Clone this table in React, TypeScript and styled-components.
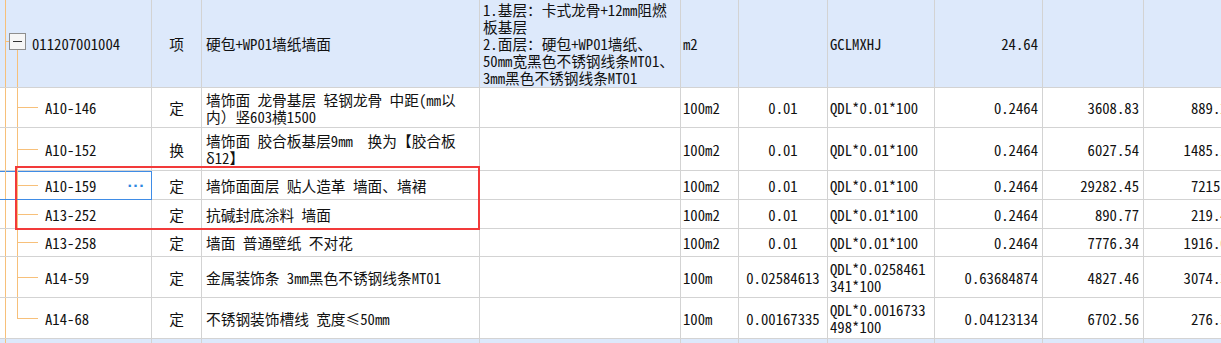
import React from 'react';
import styled, { createGlobalStyle } from 'styled-components';

const GlobalStyle = createGlobalStyle`
  html, body {
    margin: 0;
    padding: 0;
    background: #ffffff;
    overflow: hidden;
  }
`;

const COLS = '152px 50px 278px 201px 58px 89px 107px 108px 101px 100px';
const LINE = '#d3d3d3';
const TREE = '#f7c07a';

const Sheet = styled.div`
  position: relative;
  width: 1300px;
  font-family: 'Noto Sans Mono CJK SC', 'Noto Sans CJK SC', 'DejaVu Sans Mono', monospace;
  font-size: 14.7px;
  color: #111;
`;

const Row = styled.div<{ $h: number; $group?: boolean }>`
  display: grid;
  grid-template-columns: ${COLS};
  height: ${(p) => p.$h}px;
  background: ${(p) => (p.$group ? '#dde9fb' : '#ffffff')};
`;

const Cell = styled.div<{ $align?: 'left' | 'center' | 'right'; $pad?: string; $selected?: boolean }>`
  box-sizing: border-box;
  display: flex;
  align-items: center;
  justify-content: ${(p) =>
    p.$align === 'right' ? 'flex-end' : p.$align === 'center' ? 'center' : 'flex-start'};
  padding: ${(p) => p.$pad || '0 4px'};
  border-right: 1px solid ${(p) => (p.$selected ? '#3f8ce6' : LINE)};
  border-bottom: 1px solid ${(p) => (p.$selected ? '#3f8ce6' : LINE)};
  box-shadow: ${(p) => (p.$selected ? 'inset 0 1px 0 #3f8ce6' : 'none')};
  overflow: hidden;
  min-width: 0;
`;

const Lines = styled.div`
  line-height: 17px;
  white-space: pre;
`;

const CodeText = styled.span`
  flex: 1;
  white-space: pre;
  line-height: 17px;
`;

const Dots = styled.span`
  color: #2f86e0;
  font-weight: 700;
  letter-spacing: 1px;
  margin-right: 6px;
  font-family: 'DejaVu Sans', sans-serif;
  font-size: 13px;
`;

const Mark = styled.div`
  position: absolute;
  left: 15px;
  top: 166px;
  width: 465px;
  height: 64px;
  box-sizing: border-box;
  border: 2px solid #f23a3a;
  pointer-events: none;
`;

function GroupGuide({ h }: { h: number }) {
  const c = Math.round(h / 2) - 3;
  return (
    <svg width={28} height={h} style={{ flex: 'none' }}>
      <line x1={5.5} y1={0} x2={5.5} y2={h} stroke={TREE} />
      <line x1={5} y1={c + 0.5} x2={10} y2={c + 0.5} stroke={TREE} />
      <line x1={17.5} y1={c + 8} x2={17.5} y2={h} stroke={TREE} />
      <rect x={9.5} y={c - 7.5} width={16} height={16} fill="#f6f6f6" stroke="#8e8e8e" />
      <line x1={13} y1={c + 0.5} x2={22} y2={c + 0.5} stroke="#333" />
    </svg>
  );
}

function ChildGuide({ h, last }: { h: number; last?: boolean }) {
  const c = Math.floor(h / 2) + 0.5;
  return (
    <svg width={45} height={h} style={{ flex: 'none' }}>
      <line x1={5.5} y1={0} x2={5.5} y2={h} stroke={TREE} />
      <line x1={17.5} y1={0} x2={17.5} y2={last ? c : h} stroke={TREE} />
      <line x1={17} y1={c} x2={38} y2={c} stroke={TREE} />
    </svg>
  );
}

type Item = {
  code: string;
  type: string;
  name: string[];
  unit: string;
  content: string;
  expr: string[];
  qty: string;
  price: string;
  total: string;
  h: number;
  selected?: boolean;
};

const items: Item[] = [
  { code: 'A10-146', type: '定', name: ['墙饰面 龙骨基层 轻钢龙骨 中距(mm以', '内）竖603横1500'], unit: '100m2', content: '0.01', expr: ['QDL*0.01*100'], qty: '0.2464', price: '3608.83', total: '889.22', h: 40 },
  { code: 'A10-152', type: '换', name: ['墙饰面 胶合板基层9mm  换为【胶合板', 'δ12】'], unit: '100m2', content: '0.01', expr: ['QDL*0.01*100'], qty: '0.2464', price: '6027.54', total: '1485.19', h: 43 },
  { code: 'A10-159', type: '定', name: ['墙饰面面层 贴人造革 墙面、墙裙'], unit: '100m2', content: '0.01', expr: ['QDL*0.01*100'], qty: '0.2464', price: '29282.45', total: '7215.2', h: 29, selected: true },
  { code: 'A13-252', type: '定', name: ['抗碱封底涂料 墙面'], unit: '100m2', content: '0.01', expr: ['QDL*0.01*100'], qty: '0.2464', price: '890.77', total: '219.49', h: 29 },
  { code: 'A13-258', type: '定', name: ['墙面 普通壁纸 不对花'], unit: '100m2', content: '0.01', expr: ['QDL*0.01*100'], qty: '0.2464', price: '7776.34', total: '1916.09', h: 28 },
  { code: 'A14-59', type: '定', name: ['金属装饰条 3mm黑色不锈钢线条MT01'], unit: '100m', content: '0.02584613', expr: ['QDL*0.0258461', '341*100'], qty: '0.63684874', price: '4827.46', total: '3074.36', h: 41 },
  { code: 'A14-68', type: '定', name: ['不锈钢装饰槽线 宽度≤50mm'], unit: '100m', content: '0.00167335', expr: ['QDL*0.0016733', '498*100'], qty: '0.04123134', price: '6702.56', total: '276.36', h: 41 },
];

const feature = [
  '1.基层：卡式龙骨+12mm阻燃',
  '板基层',
  '2.面层：硬包+WP01墙纸、',
  '50mm宽黑色不锈钢线条MT01、',
  '3mm黑色不锈钢线条MT01',
];

export default function App() {
  return (
    <>
      <GlobalStyle />
      <Sheet>
        <Row $h={88} $group>
          <Cell $pad="0">
            <GroupGuide h={87} />
            <CodeText style={{ marginLeft: 4 }}>011207001004</CodeText>
          </Cell>
          <Cell $align="center">项</Cell>
          <Cell>
            <Lines>硬包+WP01墙纸墙面</Lines>
          </Cell>
          <Cell $pad="0 2px 0 3px">
            <Lines>{feature.join('\n')}</Lines>
          </Cell>
          <Cell $pad="0 2px">m2</Cell>
          <Cell $align="center" />
          <Cell $pad="0 2px">GCLMXHJ</Cell>
          <Cell $align="right">24.64</Cell>
          <Cell />
          <Cell />
        </Row>
        {items.map((it, i) => (
          <Row key={it.code} $h={it.h}>
            <Cell $pad="0" $selected={it.selected}>
              <ChildGuide h={it.h - 1} last={i === items.length - 1} />
              <CodeText>{it.code}</CodeText>
              {it.selected && <Dots>···</Dots>}
            </Cell>
            <Cell $align="center">{it.type}</Cell>
            <Cell>
              <Lines>{it.name.join('\n')}</Lines>
            </Cell>
            <Cell />
            <Cell $pad="0 2px">{it.unit}</Cell>
            <Cell $align="center" $pad="0 2px">
              {it.content}
            </Cell>
            <Cell $pad="0 2px">
              <Lines>{it.expr.join('\n')}</Lines>
            </Cell>
            <Cell $align="right">{it.qty}</Cell>
            <Cell $align="right">{it.price}</Cell>
            <Cell $align="right" $pad="0 8px 0 4px">
              {it.total}
            </Cell>
          </Row>
        ))}
        <Row $h={20} $group>
          <Cell $pad="0">
            <svg width={12} height={20} style={{ flex: 'none' }}>
              <line x1={5.5} y1={0} x2={5.5} y2={20} stroke={TREE} />
            </svg>
          </Cell>
          <Cell />
          <Cell />
          <Cell />
          <Cell />
          <Cell />
          <Cell />
          <Cell />
          <Cell />
          <Cell />
        </Row>
        <Mark />
      </Sheet>
    </>
  );
}
